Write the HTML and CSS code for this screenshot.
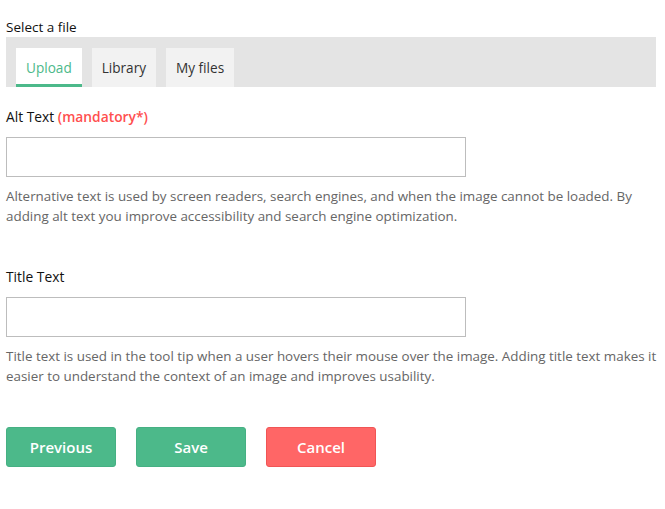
FILE: index.html
```html
<!DOCTYPE html>
<html>
<head>
<meta charset="utf-8">
<link rel="stylesheet" href="styles.css">
</head>
<body>
<div class="page">
  <div class="section-label">Select a file</div>
  <div class="tabbar">
    <div class="tab active">Upload</div>
    <div class="tab">Library</div>
    <div class="tab">My files</div>
  </div>

  <div class="field first">
    <label class="label">Alt Text <span class="req">(mandatory*)</span></label>
    <input class="input" type="text">
    <p class="help">Alternative text is used by screen readers, search engines, and when the image cannot be loaded. By adding alt text you improve accessibility and search engine optimization.</p>
  </div>

  <div class="field second">
    <label class="label">Title Text</label>
    <input class="input" type="text">
    <p class="help">Title text is used in the tool tip when a user hovers their mouse over the image. Adding title text makes it easier to understand the context of an image and improves usability.</p>
  </div>

  <div class="actions">
    <button class="btn green">Previous</button>
    <button class="btn green">Save</button>
    <button class="btn red">Cancel</button>
  </div>
</div>
</body>
</html>
```
FILE: styles.css
```css
* { box-sizing: border-box; }
body {
  margin: 0;
  background: #fff;
  font-family: "Open Sans", "Noto Sans", sans-serif;
  font-size: 13.5px;
  color: #222;
}
.page {
  width: 650px;
  margin-left: 6px;
  padding-top: 18px;
}
.section-label {
  height: 19px;
  line-height: 19px;
  color: #111;
}
.tabbar {
  background: #e4e4e4;
  height: 50px;
  padding: 11px 10px 0;
  display: flex;
  gap: 10px;
}
.tab {
  background: #f2f2f2;
  height: 39px;
  padding: 0 10px;
  display: flex;
  align-items: center;
  font-size: 13.6px;
  color: #333;
}
.tab.active {
  background: #fff;
  color: #4cb98a;
  border-bottom: 3px solid #4cb98a;
  padding-top: 3px;
}
.field { display: flex; flex-direction: column; }
.field.first { margin-top: 20px; }
.field.second { margin-top: 41px; }
.label {
  height: 20px;
  line-height: 20px;
  font-size: 13.8px;
  color: #111;
}
.req { color: #ff4f4f; font-weight: 600; }
.input {
  margin-top: 10px;
  width: 460px;
  height: 40px;
  border: 1px solid #bdbdbd;
  background: #fff;
  outline: none;
}
.help {
  margin: 10px 0 0;
  width: 652px;
  color: #666;
  font-size: 13.4px;
  line-height: 19.5px;
}
.actions {
  margin-top: 41px;
  display: flex;
  gap: 20px;
}
.btn {
  width: 110px;
  height: 40px;
  border-radius: 3px;
  font-family: inherit;
  font-size: 15px;
  font-weight: 600;
  color: #fff;
  cursor: pointer;
}
.btn.green { background: #4cb98a; border: 1px solid #46b083; }
.btn.red { background: #ff6666; border: 1px solid #f05555; }
```
